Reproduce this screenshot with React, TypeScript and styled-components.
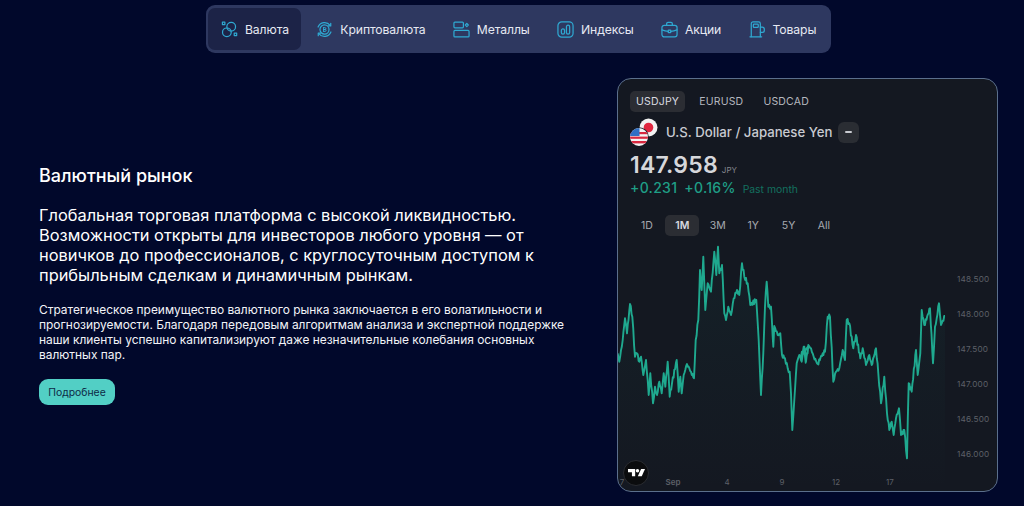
import styled, { createGlobalStyle } from 'styled-components';

const GlobalStyle = createGlobalStyle`
  html, body {
    margin: 0;
    padding: 0;
    background: #01082b;
    font-family: Inter, "Liberation Sans", sans-serif;
  }
  * { box-sizing: border-box; }
`;

const Z4: number[][] = [[20,340],[25,365],[35,300],[42,235],[48,280],[57,192],[64,230],[72,350],[78,340],[85,365],[90,350],[97,405],[105,360],[110,420],[113,465],[118,400],[126,490],[132,440],[138,465],[145,425],[152,460],[158,400],[163,440],[170,365],[176,470],[183,430],[197,360],[203,455],[208,410],[212,460],[218,405],[228,372],[240,395],[249,415],[254,300],[262,240],[267,90],[272,150],[277,50],[283,210],[290,130],[300,155],[310,35],[316,105],[321,20],[325,100],[333,75],[340,220],[345,240],[352,200],[360,225],[368,175],[378,150],[385,165],[393,70],[400,110],[410,130],[418,195],[436,180],[443,300],[450,465],[457,340],[462,200],[467,125],[472,200],[480,200],[487,320],[490,258],[500,285],[508,280],[513,345],[522,355],[530,385],[536,395],[540,460],[544,570],[550,480],[557,370],[565,345],[572,365],[580,320],[585,365],[592,318]];
const Z5: number[][] = [[0,350],[8,320],[14,368],[22,315],[30,325],[38,350],[50,372],[65,340],[72,335],[80,230],[87,230],[97,425],[105,395],[115,385],[125,330],[132,360],[137,240],[145,250],[157,325],[165,285],[178,355],[185,325],[195,375],[205,345],[212,375],[225,325],[232,400],[240,490],[250,410],[258,520],[265,570],[272,545],[278,585],[285,535],[294,505],[300,585],[310,570],[318,655],[323,430],[332,455],[345,330],[350,405],[358,340],[362,210],[370,255],[387,205],[396,370],[402,260],[407,235],[414,190],[420,255],[432,228]];

// coordinates relative to the plot (left edge of card, y=240 on page)
const anchors = [
  ...Z4.map(([x, y]) => [610 + x / 3 - 617, y / 3]),
  ...Z5.map(([x, y]) => [800 + x / 3 - 617, y / 3]),
];

// the real series is noisy between the peaks, so add a repeatable wobble
const points: number[][] = [];
anchors.forEach(([x, y], i) => {
  const next = anchors[i + 1];
  points.push([x, y]);
  if (!next) return;
  const steps = Math.floor((next[0] - x) / 0.7);
  for (let s = 1; s < steps; s++) {
    const t = s / steps;
    const wobble = Math.sin(i * 12.9 + s * 78.2) * 2.2;
    points.push([x + (next[0] - x) * t, y + (next[1] - y) * t + wobble]);
  }
});

const linePath = points.map(([x, y], i) => `${i ? 'L' : 'M'}${x.toFixed(1)} ${y.toFixed(1)}`).join(' ');
const lastX = points[points.length - 1][0];
const areaPath = `${linePath} L${lastX.toFixed(1)} 252 L0 252 Z`;

const navItems = [
  { label: 'Валюта', icon: 'currency', active: true },
  { label: 'Криптовалюта', icon: 'crypto' },
  { label: 'Металлы', icon: 'metals' },
  { label: 'Индексы', icon: 'index' },
  { label: 'Акции', icon: 'stocks' },
  { label: 'Товары', icon: 'goods' },
];

const NavIcon = ({ name }: { name: string }) => (
  <IconSvg viewBox="0 0 18 18">
    {name === 'currency' && (
      <>
        <circle cx="10.8" cy="6" r="4.6" />
        <circle cx="6.2" cy="12" r="4.6" />
        <path d="M1.5 1.2h2.6v2.6H1.5z" />
        <path d="M14 12.8h2.6v2.6H14z" />
      </>
    )}
    {name === 'crypto' && (
      <>
        <path d="M2.2 6.4A7.4 7.4 0 0 1 15 4.6" />
        <path d="M15.8 11.6A7.4 7.4 0 0 1 3 13.4" />
        <path d="M12.8 5.2h2.8V2.4" />
        <path d="M5.2 12.8H2.4v2.8" />
        <circle cx="9" cy="9" r="4.8" />
        <path d="M8 7v4M8 7h1.4a1 1 0 0 1 0 2H8M8 9h1.7a1 1 0 0 1 0 2H8" strokeWidth="1" />
      </>
    )}
    {name === 'metals' && (
      <>
        <rect x="1" y="1.2" width="10" height="6" rx="1" />
        <rect x="1" y="10" width="16" height="6.8" rx="1" />
        <path d="M14.6 2.6l1.6 1.6-1.6 1.6-1.6-1.6z" />
      </>
    )}
    {name === 'index' && (
      <>
        <rect x="1" y="1" width="16" height="16" rx="4" />
        <rect x="4.6" y="8.4" width="3.4" height="5.4" rx="1.7" />
        <rect x="10" y="4.4" width="3.4" height="9.4" rx="1.7" />
      </>
    )}
    {name === 'stocks' && (
      <>
        <rect x="1" y="4.6" width="16" height="12.2" rx="2.4" />
        <path d="M6 4.6V2.8a1.4 1.4 0 0 1 1.4-1.4h3.2A1.4 1.4 0 0 1 12 2.8v1.8" />
        <path d="M1 9.4c2.4 1 4.8 1.5 6.6 1.6M17 9.4c-2.4 1-4.8 1.5-6.6 1.6" />
        <rect x="7.6" y="9.6" width="2.8" height="2.6" rx="0.6" />
      </>
    )}
    {name === 'goods' && (
      <>
        <path d="M2.4 16.6V2.8A1.8 1.8 0 0 1 4.2 1h6a1.8 1.8 0 0 1 1.8 1.8v13.8" />
        <path d="M1 16.8h12.4" />
        <rect x="4.6" y="3.4" width="5.2" height="3.4" rx="0.8" />
        <path d="M12 6.6h2.2a2 2 0 0 1 2 2v1.4a2 2 0 0 1-2 2H12" />
      </>
    )}
  </IconSvg>
);

const FlagPair = () => (
  <FlagSvg viewBox="0 0 28 28">
    <defs>
      <clipPath id="usFlag">
        <circle cx="9" cy="19" r="9" />
      </clipPath>
    </defs>
    <circle cx="18.5" cy="9.5" r="9" fill="#f2f2f2" />
    <circle cx="18.5" cy="9.5" r="4.8" fill="#e0263f" />
    <circle cx="9" cy="19" r="9.8" fill="#141821" />
    <g clipPath="url(#usFlag)">
      <rect x="0" y="10" width="18" height="18" fill="#f4f4f4" />
      <rect x="0" y="14" width="18" height="2.2" fill="#d8283f" />
      <rect x="0" y="18.6" width="18" height="2.2" fill="#d8283f" />
      <rect x="0" y="23" width="18" height="2.4" fill="#d8283f" />
      <rect x="0" y="10" width="9.5" height="8" fill="#2f6fc4" />
    </g>
  </FlagSvg>
);

const App = () => {
  return (
    <Page>
      <GlobalStyle />
      <Nav>
        {navItems.map((item) => (
          <NavTab key={item.label} $active={item.active}>
            <NavIcon name={item.icon} />
            {item.label}
          </NavTab>
        ))}
      </Nav>
      <Main>
        <TextColumn>
          <Heading>Валютный рынок</Heading>
          <Lead>
            Глобальная торговая платформа с высокой ликвидностью.
            <br />
            Возможности открыты для инвесторов любого уровня — от
            <br />
            новичков до профессионалов, с круглосуточным доступом к
            <br />
            прибыльным сделкам и динамичным рынкам.
          </Lead>
          <Body>
            Стратегическое преимущество валютного рынка заключается в его волатильности и
            <br />
            прогнозируемости. Благодаря передовым алгоритмам анализа и экспертной поддержке
            <br />
            наши клиенты успешно капитализируют даже незначительные колебания основных
            <br />
            валютных пар.
          </Body>
          <MoreButton>Подробнее</MoreButton>
        </TextColumn>
        <Card>
          <SymbolTabs>
            <Chip $active>USDJPY</Chip>
            <Chip>EURUSD</Chip>
            <Chip>USDCAD</Chip>
          </SymbolTabs>
          <TitleRow>
            <FlagPair />
            <PairName>U.S. Dollar / Japanese Yen</PairName>
            <StatusBadge>
              <StatusDash />
            </StatusBadge>
          </TitleRow>
          <PriceRow>
            <Price>147.958</Price>
            <Currency>JPY</Currency>
          </PriceRow>
          <ChangeRow>
            <Change>+0.231</Change>
            <Change>+0.16%</Change>
            <Period>Past month</Period>
          </ChangeRow>
          <RangeTabs>
            {['1D', '1M', '3M', '1Y', '5Y', 'All'].map((range) => (
              <RangeChip key={range} $active={range === '1M'}>
                {range}
              </RangeChip>
            ))}
          </RangeTabs>
          <ChartArea>
            <PlotRow>
              <Plot viewBox="0 0 328 230" preserveAspectRatio="none">
                <defs>
                  <linearGradient id="areaFill" x1="0" y1="0" x2="0" y2="1">
                    <stop offset="0" stopColor="#22ab94" stopOpacity="0.06" />
                    <stop offset="1" stopColor="#22ab94" stopOpacity="0" />
                  </linearGradient>
                </defs>
                <path d={areaPath} fill="url(#areaFill)" />
                <path d={linePath} fill="none" stroke="#1fa98f" strokeWidth="1.9" strokeLinejoin="round" />
              </Plot>
              <PriceAxis>
                {['148.500', '148.000', '147.500', '147.000', '146.500', '146.000'].map((tick) => (
                  <Tick key={tick}>{tick}</Tick>
                ))}
              </PriceAxis>
            </PlotRow>
            <TimeAxis>
              <TimeTick $width={8}>7</TimeTick>
              <TimeTick $width={94} $bold>Sep</TimeTick>
              <TimeTick $width={14}>4</TimeTick>
              <TimeTick $width={96}>9</TimeTick>
              <TimeTick $width={12}>12</TimeTick>
              <TimeTick $width={96}>17</TimeTick>
            </TimeAxis>
            <TvBadge>
              <svg viewBox="0 0 26 12" width="17" height="8">
                <path d="M0 0h11v11H6V5H0z" fill="#fff" />
                <circle cx="14.5" cy="2.6" r="2.6" fill="#fff" />
                <path d="M20 0h6l-5 11h-6z" fill="#fff" />
              </svg>
            </TvBadge>
          </ChartArea>
        </Card>
      </Main>
    </Page>
  );
};

export default App;

const Page = styled.div`
  width: 1024px;
  height: 506px;
  overflow: hidden;
  background: #01082b;
  padding-top: 5px;
`;

const Nav = styled.nav`
  display: inline-flex;
  gap: 2.3px;
  margin-left: 206px;
  padding: 3px 2px;
  height: 48px;
  width: 625px;
  border-radius: 9px;
  background: #2e3860;
`;

const NavTab = styled.div<{ $active?: boolean }>`
  display: flex;
  align-items: center;
  gap: 7px;
  padding: 0 12px 0 13px;
  border-radius: 7px;
  font-size: 12.2px;
  letter-spacing: -0.1px;
  color: #e6e9f2;
  white-space: nowrap;
  background: ${(p) => (p.$active ? '#1c2347' : 'transparent')};
`;

const IconSvg = styled.svg`
  width: 17px;
  height: 17px;
  flex: none;
  fill: none;
  stroke: #2fa9d2;
  stroke-width: 1.3;
  stroke-linecap: round;
  stroke-linejoin: round;
`;

const Main = styled.main`
  display: flex;
  margin-top: 25px;
`;

const TextColumn = styled.section`
  width: 617px;
  padding: 87px 0 0 39px;
  color: #fff;
`;

const Heading = styled.h2`
  margin: 0;
  font-size: 18px;
  font-weight: 500;
  line-height: 22px;
`;

const Lead = styled.p`
  margin: 18px 0 0;
  font-size: 16.4px;
  line-height: 20px;
  white-space: nowrap;
`;

const Body = styled.p`
  margin: 17px 0 0;
  font-size: 11.93px;
  line-height: 15px;
  white-space: nowrap;
  color: #f2f3f7;
`;

const MoreButton = styled.button`
  display: block;
  margin-top: 17px;
  width: 76px;
  height: 26px;
  padding: 0;
  border: 0;
  border-radius: 9px;
  background: #52cfc5;
  color: #0d2a45;
  font: 400 10.4px Inter, "Liberation Sans", sans-serif;
`;

const Card = styled.section`
  display: flex;
  flex-direction: column;
  width: 381px;
  height: 414px;
  padding-top: 12px;
  overflow: hidden;
  border: 1px solid #5b6f8c;
  border-radius: 14px;
  background: #141821;
`;

const SymbolTabs = styled.div`
  display: flex;
  gap: 4px;
  padding-left: 12px;
`;

const Chip = styled.div<{ $active?: boolean }>`
  padding: 0 6px;
  height: 21px;
  line-height: 21px;
  border-radius: 5px;
  font-size: 10.5px;
  font-weight: 400;
  letter-spacing: 0.2px;
  margin-right: 4px;
  color: ${(p) => (p.$active ? '#d8dae0' : '#b4b7bf')};
  background: ${(p) => (p.$active ? '#2b2d33' : 'transparent')};
`;

const TitleRow = styled.div`
  display: flex;
  align-items: center;
  height: 28px;
  margin-top: 6px;
  padding-left: 12px;
`;

const FlagSvg = styled.svg`
  width: 28px;
  height: 28px;
  flex: none;
`;

const PairName = styled.div`
  margin-left: 8px;
  font-size: 13.2px;
  font-weight: 500;
  color: #c9cbd1;
  white-space: nowrap;
`;

const StatusBadge = styled.div`
  display: flex;
  align-items: center;
  justify-content: center;
  width: 21px;
  height: 21px;
  margin-left: 6px;
  border-radius: 6px;
  background: #2a2d33;
`;

const StatusDash = styled.div`
  width: 7px;
  height: 2px;
  border-radius: 1px;
  background: #c9cbd1;
`;

const PriceRow = styled.div`
  display: flex;
  align-items: baseline;
  gap: 4px;
  height: 28px;
  margin-top: 5px;
  padding-left: 12px;
`;

const Price = styled.div`
  font-size: 23px;
  font-weight: 600;
  letter-spacing: 0.2px;
  line-height: 28px;
  color: #d6d7db;
`;

const Currency = styled.div`
  font-size: 8px;
  color: #85888f;
`;

const ChangeRow = styled.div`
  display: flex;
  align-items: baseline;
  gap: 7px;
  padding-left: 12px;
  height: 18px;
`;

const Change = styled.div`
  font-size: 14px;
  font-weight: 500;
  letter-spacing: 0.3px;
  color: #1f9e86;
`;

const Period = styled.div`
  font-size: 10.4px;
  color: #13705f;
`;

const RangeTabs = styled.div`
  display: flex;
  gap: 1.4px;
  margin-top: 18px;
  padding-left: 12px;
`;

const RangeChip = styled.div<{ $active?: boolean }>`
  width: 34px;
  height: 21px;
  line-height: 21px;
  text-align: center;
  border-radius: 5px;
  font-size: 10.5px;
  font-weight: ${(p) => (p.$active ? 600 : 400)};
  color: ${(p) => (p.$active ? '#d8dae0' : '#a6a9b0')};
  background: ${(p) => (p.$active ? '#2b2d33' : 'transparent')};
`;

const ChartArea = styled.div`
  position: relative;
  display: flex;
  flex-direction: column;
  flex: 1;
  margin-top: 4px;
`;

const PlotRow = styled.div`
  display: flex;
  height: 230px;
`;

const Plot = styled.svg`
  display: block;
  width: 328px;
  height: 230px;
  overflow: visible;
`;

const PriceAxis = styled.div`
  display: flex;
  flex-direction: column;
  gap: 35px;
  margin-left: 11px;
  padding-top: 39px;
`;

const Tick = styled.div`
  height: 0;
  line-height: 0;
  font-size: 8.2px;
  letter-spacing: 0.2px;
  color: #5d6068;
`;

const TimeAxis = styled.div`
  display: flex;
  align-items: center;
  height: 18px;
  margin-top: 3px;
`;

const TimeTick = styled.div<{ $width: number; $bold?: boolean }>`
  width: ${(p) => p.$width}px;
  text-align: center;
  font-size: 8px;
  font-weight: ${(p) => (p.$bold ? 600 : 400)};
  color: #5d6068;
`;

const TvBadge = styled.div`
  position: absolute;
  left: 5px;
  bottom: 5px;
  display: flex;
  align-items: center;
  justify-content: center;
  width: 26px;
  height: 26px;
  border-radius: 50%;
  background: #0b0c0e;
  border: 1px solid #2a2c31;
`;
